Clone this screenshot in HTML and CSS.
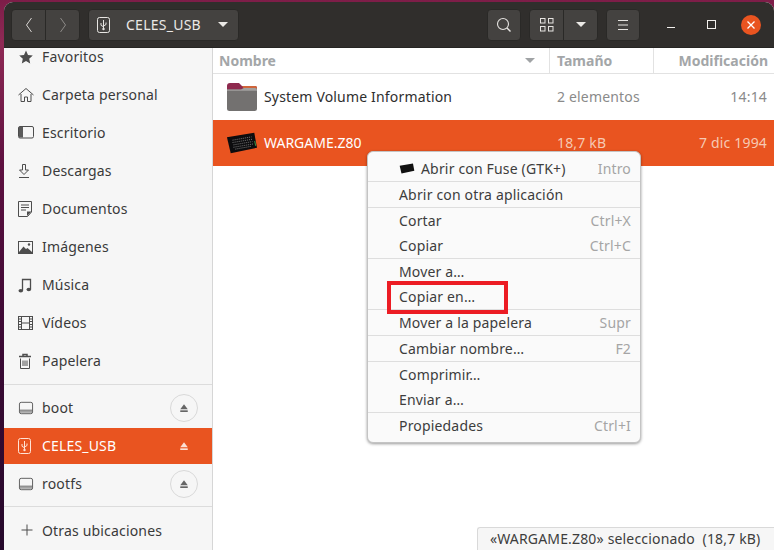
FILE: index.html
```html
<!DOCTYPE html>
<html lang="es">
<head>
<meta charset="utf-8">
<title>CELES_USB</title>
<link rel="stylesheet" href="styles.css">
</head>
<body>
<svg class="defs" width="0" height="0" aria-hidden="true">
  <defs>
    <symbol id="eject" viewBox="0 0 12 12"><path d="M6 1.500 10.500 7.500H1.500Z" fill="currentColor"/><rect x="1.500" y="8.800" width="9" height="2" fill="currentColor"/></symbol>
    <symbol id="drive" viewBox="0 0 16 16"><rect x=".5" y="1.500" width="15" height="13" rx="2" fill="none" stroke="currentColor"/><path d="M1 10.500H15M1 12.500H15" stroke="currentColor" fill="none"/></symbol>
    <symbol id="usb" viewBox="0 0 14 16"><rect x=".5" y=".5" width="12" height="15" rx="2" fill="none" stroke="currentColor"/><path d="M6.500 3V13M4 6V8.300L6.500 9.800M9 5.500V7.500L6.500 9" fill="none" stroke="currentColor"/><circle cx="6.500" cy="12" r="1.200" fill="currentColor"/></symbol>
    <symbol id="keyb" viewBox="0 0 34 24"><path d="M1 6 30 1 33 17 5 23Z" fill="#0c0c0e"/><path d="M7 9 27 5.500M7 11.500 28 8M8 14 28 10.500M8 16.500 29 13M10 18.500 27 15.500" stroke="#8b8b8b" stroke-width="1" stroke-dasharray="1 1.200"/><path d="M30.500 10 31.500 15" stroke="#3fa34d" stroke-width="1"/></symbol>
  </defs>
</svg>
<div class="window">
  <header class="headerbar">
    <div class="group">
      <button class="btn nav"><svg width="10" height="16" viewBox="0 0 10 16"><path d="M7.500 1 2.500 8l5 7" fill="none" stroke="#d8d6d3" stroke-width="1"/></svg></button>
      <button class="btn nav"><svg width="10" height="16" viewBox="0 0 10 16"><path d="M2.500 1l5 7-5 7" fill="none" stroke="#8d8b88" stroke-width="1"/></svg></button>
    </div>
    <button class="btn path">
      <svg class="path-usb" width="14" height="16"><use href="#usb"/></svg>
      <span>CELES_USB</span>
      <svg class="path-caret" width="10" height="5" viewBox="0 0 10 5"><path d="M0 0H10L5 5Z" fill="#ebe9e6"/></svg>
    </button>
    <div class="spacer"></div>
    <button class="btn square"><svg width="16" height="16" viewBox="0 0 16 16"><circle cx="7" cy="7" r="5.500" fill="none" stroke="#e6e4e1" stroke-width="1.100"/><path d="M11 11 14.500 14.500" stroke="#e6e4e1" stroke-width="1.400"/></svg></button>
    <div class="group">
      <button class="btn square"><svg width="14" height="14" viewBox="0 0 14 14"><g fill="none" stroke="#e6e4e1"><rect x=".5" y=".5" width="4.500" height="4.500"/><rect x="8.500" y=".5" width="4.500" height="4.500"/><rect x=".5" y="8.500" width="4.500" height="4.500"/><rect x="8.500" y="8.500" width="4.500" height="4.500"/></g></svg></button>
      <button class="btn square"><svg width="10" height="5" viewBox="0 0 10 5"><path d="M0 0H10L5 5Z" fill="#ebe9e6"/></svg></button>
    </div>
    <button class="btn square"><svg width="12" height="10" viewBox="0 0 12 10"><path d="M1 .5H11M1 5H11M1 9.500H11" stroke="#e6e4e1" fill="none"/></svg></button>
    <div class="winctl">
      <span class="wc wc-min"></span>
      <span class="wc wc-max"></span>
      <span class="wc wc-close"><svg width="10" height="10" viewBox="0 0 10 10"><path d="M1.500 1.500l7 7M8.500 1.500l-7 7" stroke="#fff" stroke-width="1.300"/></svg></span>
    </div>
  </header>

  <div class="main">
    <aside class="sidebar">
      <div class="side-row side-first">
        <svg class="si" width="14" height="14" viewBox="0 0 14 14"><path d="M7 .5 9 5l4.800.5-3.600 3.200 1 4.800L7 11.100 2.800 13.500l1-4.800L.2 5.500 5 5Z" fill="#4d4d4d"/></svg>
        <span>Favoritos</span>
      </div>
      <div class="side-row">
        <svg class="si" width="16" height="16" viewBox="0 0 16 16"><path d="M.5 8 8 1.500 15.500 8M3 7V14.500H6.500V10H9.500V14.500H13V7" fill="none" stroke="#4d4d4d"/></svg>
        <span>Carpeta personal</span>
      </div>
      <div class="side-row">
        <svg class="si" width="16" height="14" viewBox="0 0 16 14"><rect x=".5" y=".5" width="15" height="11.500" rx="1.500" fill="none" stroke="#4d4d4d"/><rect x="1" y="1" width="4" height="10.500" fill="#5a5a5a"/></svg>
        <span>Escritorio</span>
      </div>
      <div class="side-row">
        <svg class="si" width="12" height="16" viewBox="0 0 12 16"><path d="M4.500 1.500H7.500V7H10.500L6 11.500 1.500 7H4.500Z" fill="none" stroke="#4d4d4d"/><path d="M1 14.500H11" stroke="#4d4d4d"/></svg>
        <span>Descargas</span>
      </div>
      <div class="side-row">
        <svg class="si" width="14" height="16" viewBox="0 0 14 16"><path d="M.5 .5H13.500V11L9.500 15.500H.5Z" fill="none" stroke="#4d4d4d"/><path d="M3 4H11M3 6.500H11M3 9H8" stroke="#4d4d4d"/><path d="M9 15V10.500H13.500Z" fill="#4d4d4d"/></svg>
        <span>Documentos</span>
      </div>
      <div class="side-row">
        <svg class="si" width="15" height="13" viewBox="0 0 15 13"><rect x=".5" y=".5" width="14" height="12" fill="none" stroke="#4d4d4d"/><path d="M1 11 5.500 5.500 8 8 9.500 7 14 11V12H1Z" fill="#4d4d4d"/><circle cx="11" cy="3.500" r="1.200" fill="#4d4d4d"/></svg>
        <span>Imágenes</span>
      </div>
      <div class="side-row">
        <svg class="si" width="14" height="15" viewBox="0 0 14 15"><path d="M4.500 12.500V1.500H12.500V11" fill="none" stroke="#4d4d4d" stroke-width="1.300"/><ellipse cx="2.800" cy="12.800" rx="2.300" ry="1.800" fill="#4d4d4d"/><ellipse cx="10.800" cy="11.500" rx="2.300" ry="1.800" fill="#4d4d4d"/></svg>
        <span>Música</span>
      </div>
      <div class="side-row">
        <svg class="si" width="15" height="14" viewBox="0 0 15 14"><rect x=".5" y=".5" width="14" height="13" fill="none" stroke="#4d4d4d"/><path d="M3.500 .5V13.500M11.500 .5V13.500M3.500 7H11.500M.5 3H3.500M.5 5.500H3.500M.5 8.500H3.500M.5 11H3.500M11.500 3H14.500M11.500 5.500H14.500M11.500 8.500H14.500M11.500 11H14.500" fill="none" stroke="#4d4d4d"/></svg>
        <span>Vídeos</span>
      </div>
      <div class="side-row">
        <svg class="si" width="14" height="16" viewBox="0 0 14 16"><path d="M1 3.500H13M5 3V1.500H9V3" fill="none" stroke="#4d4d4d" stroke-width="1.500"/><path d="M2.500 5.500V15.500H11.500V5.500M5 7.500V13M7 7.500V13M9 7.500V13" fill="none" stroke="#4d4d4d"/></svg>
        <span>Papelera</span>
      </div>
      <div class="side-sep side-sep-a"></div>
      <div class="side-row dev">
        <svg class="si" width="16" height="14" viewBox="0 0 16 14"><use href="#drive"/></svg>
        <span>boot</span>
        <span class="eject-ring"><svg width="10" height="10"><use href="#eject"/></svg></span>
      </div>
      <div class="side-row dev active">
        <svg class="si" width="14" height="16"><use href="#usb"/></svg>
        <span>CELES_USB</span>
        <span class="eject-plain"><svg width="10" height="10"><use href="#eject"/></svg></span>
      </div>
      <div class="side-row dev">
        <svg class="si" width="16" height="14" viewBox="0 0 16 14"><use href="#drive"/></svg>
        <span>rootfs</span>
        <span class="eject-ring"><svg width="10" height="10"><use href="#eject"/></svg></span>
      </div>
      <div class="side-sep side-sep-b"></div>
      <div class="side-row other">
        <svg class="si" width="12" height="12" viewBox="0 0 12 12"><path d="M6 .5V11.500M.5 6H11.500" stroke="#4d4d4d" fill="none"/></svg>
        <span>Otras ubicaciones</span>
      </div>
    </aside>

    <section class="files">
      <div class="cols">
        <div class="col col-name"><span>Nombre</span><svg width="10" height="5" viewBox="0 0 10 5"><path d="M0 0H10L5 5Z" fill="#a0a3a5"/></svg></div>
        <div class="col">Tamaño</div>
        <div class="col col-mod">Modificación</div>
      </div>
      <div class="frow">
        <div class="fname">
          <svg class="ficon" width="32" height="30" viewBox="0 0 32 30"><path d="M1 4a3 3 0 0 1 3-3h9l3 3h13a2 2 0 0 1 2 2v6H1Z" fill="#8e2a4e"/><path d="M16 4h13a2 2 0 0 1 2 2v1H18Z" fill="#d0653a"/><path d="M1 7.500h14l3-1.500h11a2 2 0 0 1 2 2v18.500a2.500 2.500 0 0 1-2.500 2.500h-25A2.500 2.500 0 0 1 1 26.500Z" fill="#737170"/><path d="M1 7.500h14l3-1.500h11a2 2 0 0 1 2 2v.8H18L15 8.800H1Z" fill="#a3a09e"/></svg>
          <span>System Volume Information</span>
        </div>
        <div class="fsize">2 elementos</div>
        <div class="fmod">14:14</div>
      </div>
      <div class="frow selected">
        <div class="fname">
          <svg class="ficon" width="32" height="24" viewBox="0 0 34 24"><use href="#keyb"/></svg>
          <span>WARGAME.Z80</span>
        </div>
        <div class="fsize">18,7 kB</div>
        <div class="fmod">7 dic 1994</div>
      </div>
    </section>
  </div>
</div>

<nav class="menu">
  <div class="mi"><span class="mi-fuse"><svg width="16" height="11" viewBox="0 0 34 24"><path d="M1 6 30 1 33 17 5 23Z" fill="#111"/></svg>Abrir con Fuse (GTK+)</span><kbd>Intro</kbd></div>
  <div class="msep"></div>
  <div class="mi"><span>Abrir con otra aplicación</span></div>
  <div class="msep"></div>
  <div class="mi"><span>Cortar</span><kbd>Ctrl+X</kbd></div>
  <div class="mi"><span>Copiar</span><kbd>Ctrl+C</kbd></div>
  <div class="msep"></div>
  <div class="mi"><span>Mover a…</span></div>
  <div class="mi"><span>Copiar en…</span></div>
  <div class="msep"></div>
  <div class="mi"><span>Mover a la papelera</span><kbd>Supr</kbd></div>
  <div class="msep"></div>
  <div class="mi"><span>Cambiar nombre…</span><kbd>F2</kbd></div>
  <div class="msep"></div>
  <div class="mi"><span>Comprimir…</span></div>
  <div class="mi"><span>Enviar a…</span></div>
  <div class="msep"></div>
  <div class="mi"><span>Propiedades</span><kbd>Ctrl+I</kbd></div>
</nav>
<div class="highlight"></div>
<div class="status">«WARGAME.Z80» seleccionado  (18,7 kB)</div>
</body>
</html>
```
FILE: styles.css
```css
* { box-sizing: border-box; }
html, body { margin: 0; height: 100%; }
body {
  width: 774px;
  height: 550px;
  overflow: hidden;
  position: relative;
  padding: 2px 0 0 4px;
  font-family: "Noto Sans", "DejaVu Sans", sans-serif;
  font-size: 14px;
  letter-spacing: .17px;
  color: #3d3d3d;
  background: linear-gradient(180deg, #7d1d48 0%, #8f2a55 8%, #5e1040 30%, #3d0a35 60%, #25092b 100%);
}
.defs { position: absolute; }
.window {
  width: 770px;
  height: 548px;
  border-radius: 9px 9px 0 0;
  overflow: hidden;
  display: flex;
  flex-direction: column;
  background: #fff;
}
.headerbar {
  height: 46px;
  flex: none;
  display: flex;
  align-items: center;
  gap: 8px;
  padding: 0 0 0 7px;
  background: #302e2c;
  border-bottom: 1px solid #262523;
}
.group { display: flex; }
.btn {
  height: 32px;
  padding: 0;
  border: 1px solid #2a2927;
  border-radius: 4px;
  background: #444240;
  color: #ebe9e6;
  font: inherit;
  display: flex;
  align-items: center;
  justify-content: center;
}
.group .btn:first-child { border-radius: 4px 0 0 4px; }
.group .btn:last-child { border-radius: 0 4px 4px 0; margin-left: -1px; }
.nav { width: 35px; }
.square { width: 34px; }
.group .square { width: 35px; }
.path { width: 151px; justify-content: flex-start; padding-left: 8px; }
.path-usb { color: #e8e6e3; }
.path span { margin-left: 15px; font-size: 14px; letter-spacing: .25px; }
.path-caret { margin-left: 17px; }
.spacer { flex: 1; }
.winctl { display: flex; align-items: center; margin-left: 4px; width: 122px; height: 32px; }
.wc { display: flex; align-items: center; justify-content: center; flex: none; }
.wc-min { width: 8px; height: 1px; margin-left: 15px; background: #f2f0ed; margin-top: 5px; }
.wc-max { margin-left: 32px; width: 9px; height: 9px; border: 1px solid #f2f0ed; }
.wc-close { width: 20px; height: 20px; border-radius: 50%; margin-left: 25px; background: #e95420; }
.main { flex: 1; display: flex; min-height: 0; }
.sidebar {
  width: 209px;
  flex: none;
  overflow: hidden;
  background: #f6f6f6;
  border-right: 1px solid #d6d6d6;
}
.side-row {
  height: 38px;
  display: flex;
  align-items: center;
  padding-left: 14px;
  position: relative;
  color: #3a3a3a;
}
.side-row > span:first-of-type { position: absolute; left: 38px; margin-bottom: 2px; }
.si { flex: none; color: #4d4d4d; }
.side-first { height: 18px; margin-bottom: 10px; padding-left: 15px; }
.side-sep { height: 1px; background: #dcdcdc; }
.side-sep-a { margin-top: 4px; margin-bottom: 4px; }
.dev { height: 38px; }
.dev.active { height: 36px; margin: 1px 0; background: #e95420; color: #fff; }
.dev.active .si { color: #ffe3d6; }
.side-sep-b { margin-top: 3px; }
.other { height: 46px; padding-left: 17px; }
.other > span:first-of-type { margin-bottom: 0; }
.eject-ring, .eject-plain {
  position: absolute;
  right: 14px;
  top: 5px;
  width: 28px;
  height: 28px;
  border-radius: 50%;
  display: flex;
  align-items: center;
  justify-content: center;
  color: #666;
  background: #f6f6f6;
  border: 1px solid #d9d9d9;
}
.eject-plain { top: 4px; border: 0; background: none; color: #fbe0d4; }
.files { flex: 1; min-width: 0; }
.cols {
  display: grid;
  grid-template-columns: 336px 104px 121px;
  height: 26px;
  border-bottom: 1px solid #e2e2e2;
  letter-spacing: 0;
}
.col {
  display: flex;
  align-items: center;
  padding: 0 6px 0 7px;
  font-weight: 700;
  color: #a3a6a8;
  border-left: 1px solid #e2e2e2;
  justify-content: space-between;
}
.col-name { border-left: 0; padding-left: 6px; padding-right: 14px; }
.col-mod { justify-content: flex-end; padding-right: 6px; }
.frow {
  display: grid;
  grid-template-columns: 336px 104px 121px;
  height: 46px;
  align-items: center;
  color: #8a8a8a;
}
.fname { display: flex; align-items: center; color: #2e2e2e; padding-left: 13px; height: 100%; }
.fname span { margin-bottom: 2px; }
.ficon { flex: none; margin-right: 6px; }
.fsize { padding-left: 8px; margin-bottom: 2px; }
.fmod { text-align: right; padding-right: 7px; margin-bottom: 2px; }
.selected { background: #e95420; color: #f6c9b3; }
.selected .fname { color: #fff; letter-spacing: 0; }
.menu {
  position: absolute;
  left: 367px;
  top: 151px;
  width: 274px;
  height: 292px;
  padding: 4px 0;
  background: #fafafa;
  border: 1px solid #c4c4c4;
  border-radius: 6px;
  box-shadow: 0 1px 3px rgba(0,0,0,.4);
  color: #3d3d3d;
}
.mi {
  height: 25px;
  display: flex;
  align-items: center;
  justify-content: space-between;
  padding: 0 9px 0 31px;
}
.mi kbd { font: inherit; color: #a5a5a5; }
.mi-fuse { display: flex; align-items: center; }
.mi-fuse svg { margin-right: 6px; }
.msep { height: 1px; background: #dedede; }
.highlight {
  position: absolute;
  left: 387px;
  top: 281px;
  width: 121px;
  height: 33px;
  border: 4px solid #ec1c24;
}
.status {
  position: absolute;
  right: 0;
  bottom: 0;
  width: 297px;
  height: 23px;
  padding-left: 12px;
  background: #f6f6f6;
  border: 1px solid #d9d9d9;
  border-width: 1px 0 0 1px;
  border-radius: 3px 0 0 0;
  color: #3d3d3d;
  white-space: pre;
  line-height: 21px;
}
```
